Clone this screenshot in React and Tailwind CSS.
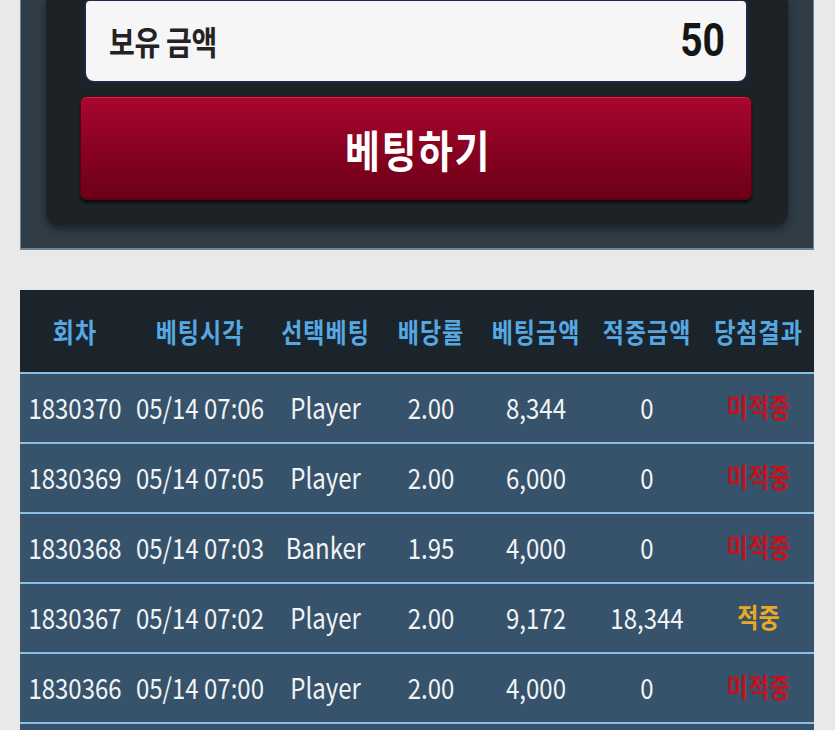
import React from 'react';

const rows = [
  { no: '1830370', time: '05/14 07:06', pick: 'Player', odds: '2.00', bet: '8,344', win: '0', hit: false },
  { no: '1830369', time: '05/14 07:05', pick: 'Player', odds: '2.00', bet: '6,000', win: '0', hit: false },
  { no: '1830368', time: '05/14 07:03', pick: 'Banker', odds: '1.95', bet: '4,000', win: '0', hit: false },
  { no: '1830367', time: '05/14 07:02', pick: 'Player', odds: '2.00', bet: '9,172', win: '18,344', hit: true },
  { no: '1830366', time: '05/14 07:00', pick: 'Player', odds: '2.00', bet: '4,000', win: '0', hit: false },
  { no: '1830365', time: '05/14 06:58', pick: 'Banker', odds: '1.95', bet: '5,000', win: '0', hit: false },
];

const headers = ['회차', '베팅시각', '선택베팅', '배당률', '베팅금액', '적중금액', '당첨결과'];

const cols = 'grid grid-cols-[110px_140px_111px_100px_110px_112px_111px]';

// the source font renders a bit taller than wide, so stretch glyphs slightly
function Tall({ children, className = '' }) {
  return <span className={`inline-block scale-y-[1.18] ${className}`}>{children}</span>;
}

function App() {
  return (
    <div className="min-h-screen bg-[#e9e9e9] font-['Noto_Sans_CJK_KR','Noto_Sans',sans-serif]">
      {/* bet panel */}
      <div className="mx-[20px] w-[794px] bg-[#303d47] border-l border-r border-b-2 border-[#6f8594] px-[25px] pb-[23px]">
        <div className="rounded-b-[12px] bg-[#1c2226] pl-[34px] pr-[36px] pb-[25px] shadow-[0_4px_10px_rgba(0,0,0,0.45)]">
          <div className="mx-[4px] h-[84px] -mt-px rounded-b-[10px] rounded-t-[6px] border-2 border-[#1c2a4e] bg-[#f6f6f6] flex items-center justify-between pl-[23px] pr-[21px]">
            <Tall className="text-[28px] font-bold text-[#232323] tracking-[-0.3px]">보유 금액</Tall>
            <Tall className="font-['Roboto',sans-serif] text-[39px] font-bold text-[#151515] leading-none">50</Tall>
          </div>
          <button className="mt-[13px] w-full h-[104px] rounded-[7px] border border-[#5a0012] bg-gradient-to-b from-[#a9062d] to-[#6c0018] shadow-[0_3px_2px_rgba(0,0,0,0.6),inset_0_1px_0_rgba(255,120,140,0.35)] flex items-center justify-center">
            <Tall className="text-[38px] font-bold text-white tracking-[1.5px] ml-[4px]">베팅하기</Tall>
          </button>
        </div>
      </div>

      {/* history table */}
      <div className="mt-[40px] mx-[20px] w-[794px]">
        <div className={`${cols} h-[82px] bg-[#1b242b] items-center`}>
          {headers.map((h) => (
            <div key={h} className="text-center text-[23px] font-bold text-[#55a8e4] tracking-[1px]">
              <Tall>{h}</Tall>
            </div>
          ))}
        </div>
        {rows.map((r) => (
          <div key={r.no} className={`${cols} h-[70px] pb-[3px] border-t-2 border-[#8abee2] bg-[#36536b] items-center text-[24px] text-[#f2f4f6]`}>
            <div className="text-center"><Tall>{r.no}</Tall></div>
            <div className="text-center"><Tall>{r.time}</Tall></div>
            <div className="text-center"><Tall>{r.pick}</Tall></div>
            <div className="text-center"><Tall>{r.odds}</Tall></div>
            <div className="text-center"><Tall>{r.bet}</Tall></div>
            <div className="text-center"><Tall>{r.win}</Tall></div>
            <div className={`text-center text-[23px] font-bold ${r.hit ? 'text-[#e9a925]' : 'text-[#c3121c]'}`}>
              <Tall>{r.hit ? '적중' : '미적중'}</Tall>
            </div>
          </div>
        ))}
      </div>
    </div>
  );
}

export default App;
